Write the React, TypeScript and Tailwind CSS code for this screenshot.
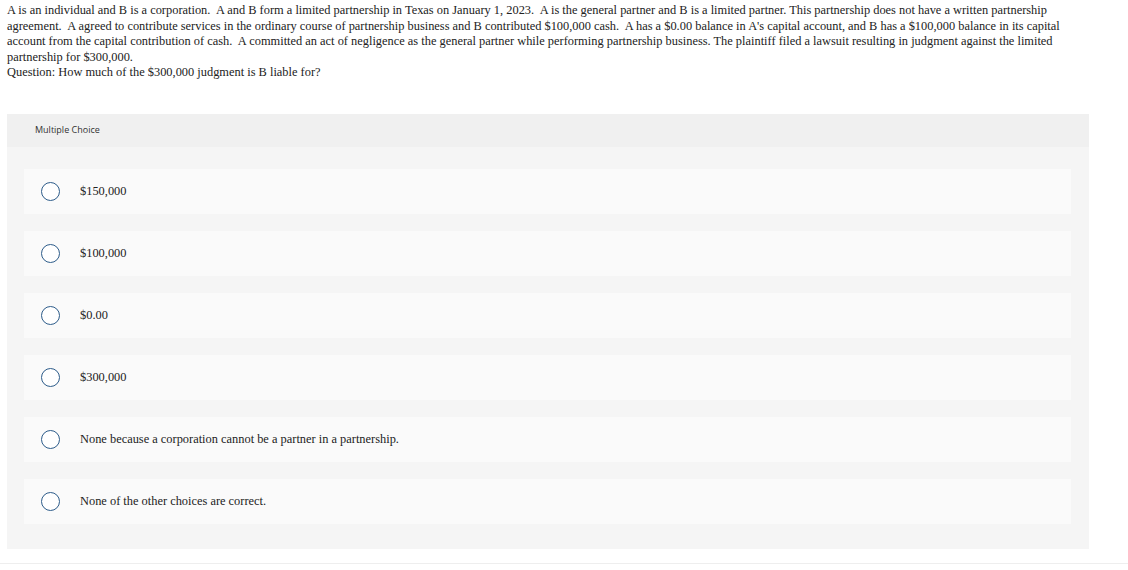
const choices = [
  '$150,000',
  '$100,000',
  '$0.00',
  '$300,000',
  'None because a corporation cannot be a partner in a partnership.',
  'None of the other choices are correct.',
];

export default function App() {
  return (
    <div className="w-[1128px] h-[570px] bg-white overflow-hidden">
      <div className="pl-[7px] pr-[56px] pt-[3px] text-[12.4px] leading-[15.5px] text-[#222] font-['Liberation_Serif','Times_New_Roman',serif]">
        <p>
          A is an individual and B is a corporation.&nbsp; A and B form a limited partnership in Texas on January 1, 2023.&nbsp; A is the general partner and B is a limited partner. This partnership does not have a written partnership agreement.&nbsp; A agreed to contribute services in the ordinary course of partnership business and B contributed $100,000 cash.&nbsp; A has a $0.00 balance in A's capital account, and B has a $100,000 balance in its capital account from the capital contribution of cash.&nbsp; A committed an act of negligence as the general partner while performing partnership business. The plaintiff filed a lawsuit resulting in judgment against the limited partnership for $300,000.
        </p>
        <p>Question: How much of the $300,000 judgment is B liable for?</p>
      </div>

      <div className="ml-[7px] mt-[33px] w-[1082px] bg-[#f5f5f5]">
        <div className="h-[33px] bg-[#f0f0f0] flex items-center pl-[28px] text-[9px] text-[#333] font-['Open_Sans','Liberation_Sans',sans-serif]">
          Multiple Choice
        </div>
        <div className="flex flex-col gap-[17px] pt-[22px] pb-[25px] pl-[17px] pr-[18px]">
          {choices.map((c) => (
            <div key={c} className="h-[45px] bg-[#fafafa] flex items-center">
              <span className="ml-[17px] w-[19px] h-[19px] rounded-full border-[1.5px] border-[#2d5c8a] bg-white shrink-0" />
              <span className="ml-[20px] text-[12.4px] text-[#222] font-['Liberation_Serif','Times_New_Roman',serif]">{c}</span>
            </div>
          ))}
        </div>
      </div>

      <div className="mt-[14px] h-px bg-[#eeeeee]" />
    </div>
  );
}
